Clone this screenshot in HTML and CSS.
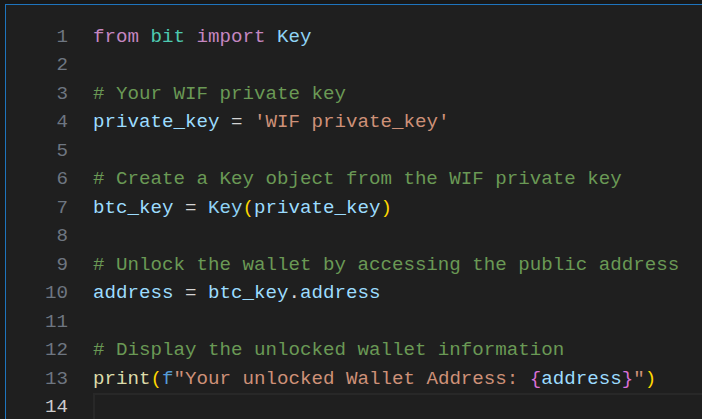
FILE: index.html
```html
<!DOCTYPE html>
<html>
<head>
<meta charset="utf-8">
<link rel="stylesheet" href="styles.css">
</head>
<body>
<div class="editor">
  <div class="gutter">
    <div class="ln">1</div>
    <div class="ln">2</div>
    <div class="ln">3</div>
    <div class="ln">4</div>
    <div class="ln">5</div>
    <div class="ln">6</div>
    <div class="ln">7</div>
    <div class="ln">8</div>
    <div class="ln">9</div>
    <div class="ln">10</div>
    <div class="ln">11</div>
    <div class="ln">12</div>
    <div class="ln">13</div>
    <div class="ln active">14</div>
  </div>
  <div class="code">
    <div class="line"><span class="kw">from</span> <span class="mod">bit</span> <span class="kw">import</span> <span class="cls">Key</span></div>
    <div class="line"></div>
    <div class="line"><span class="cm"># Your WIF private key</span></div>
    <div class="line"><span class="var">private_key</span> <span class="op">=</span> <span class="str">'WIF private_key'</span></div>
    <div class="line"></div>
    <div class="line"><span class="cm"># Create a Key object from the WIF private key</span></div>
    <div class="line"><span class="var">btc_key</span> <span class="op">=</span> <span class="cls">Key</span><span class="br1">(</span><span class="var">private_key</span><span class="br1">)</span></div>
    <div class="line"></div>
    <div class="line"><span class="cm"># Unlock the wallet by accessing the public address</span></div>
    <div class="line"><span class="var">address</span> <span class="op">=</span> <span class="var">btc_key</span><span class="op">.</span><span class="var">address</span></div>
    <div class="line"></div>
    <div class="line"><span class="cm"># Display the unlocked wallet information</span></div>
    <div class="line"><span class="fn">print</span><span class="br1">(</span><span class="sto">f</span><span class="str">"Your unlocked Wallet Address: </span><span class="br2">{</span><span class="var">address</span><span class="br2">}</span><span class="str">"</span><span class="br1">)</span></div>
    <div class="line current"></div>
  </div>
</div>
</body>
</html>
```
FILE: styles.css
```css
html, body {
  margin: 0;
  padding: 0;
  height: 100%;
  background: #181818;
  overflow: hidden;
}
.editor {
  margin: 4px 0 0 5px;
  height: calc(100% - 4px);
  border-top: 1px solid #1e74bd;
  border-left: 1px solid #1e74bd;
  background: #1f1f1f;
  display: flex;
  padding-top: 17.5px;
  box-sizing: border-box;
  font-family: "Liberation Mono", "DejaVu Sans Mono", monospace;
  font-size: 19.17px;
}
.gutter {
  width: 62px;
  text-align: right;
  color: #6e7681;
  flex: none;
}
.ln, .line {
  height: 28.5px;
  line-height: 28.5px;
  white-space: pre;
}
.ln.active {
  color: #cccccc;
}
.code {
  margin-left: 25px;
  flex: 1;
  color: #d4d4d4;
}
.line.current {
  box-sizing: border-box;
  border: 2px solid #282828;
  border-right: none;
}
.kw { color: #c586c0; }
.mod { color: #4ec9b0; }
.cls { color: #8fd3f5; }
.cm { color: #6a9955; }
.var { color: #9cdcfe; }
.op { color: #d4d4d4; }
.str { color: #ce9178; }
.fn { color: #dcdcaa; }
.sto { color: #569cd6; }
.br1 { color: #ffd700; }
.br2 { color: #da70d6; }
```
